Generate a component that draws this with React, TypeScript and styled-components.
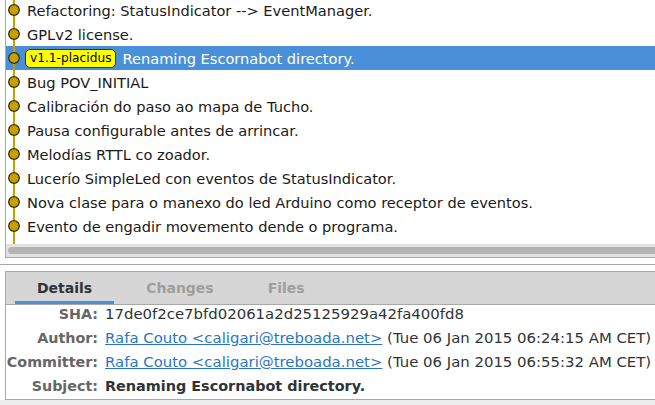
import React from 'react';
import styled, { createGlobalStyle } from 'styled-components';

const GlobalStyle = createGlobalStyle`
  html, body {
    margin: 0;
    padding: 0;
    background: #ededed;
  }
  body {
    font-family: "DejaVu Sans", "Liberation Sans", sans-serif;
    font-size: 14px;
    color: #2e3436;
  }
`;

const Window = styled.div`
  width: 655px;
  height: 405px;
  overflow: hidden;
  background: #ffffff;
  display: flex;
  flex-direction: column;
`;

const HistoryPanel = styled.div`
  margin-left: 5px;
  width: 660px;
  height: 257px;
  border-left: 1px solid #a8a8a8;
  border-bottom: 1px solid #a8a8a8;
  display: flex;
  flex-direction: column;
  overflow: hidden;
  flex-shrink: 0;
`;

const CommitList = styled.div`
  flex: 1;
  overflow: hidden;
`;

const Rows = styled.div`
  margin-top: -2px;
`;

const Row = styled.div<{ $selected?: boolean }>`
  height: 24px;
  display: flex;
  align-items: center;
  font-size: 14.6px;
  background: ${(p) => (p.$selected ? '#4a90d9' : 'transparent')};
  color: ${(p) => (p.$selected ? '#ffffff' : '#1a1a1a')};
  white-space: nowrap;
`;

const Graph = styled.svg`
  width: 20px;
  height: 24px;
  flex-shrink: 0;
  display: block;
`;

const Message = styled.span`
  margin-left: 1px;
`;

const TagBadge = styled.span`
  display: inline-flex;
  align-items: center;
  height: 17px;
  padding: 0 4px 0 4px;
  margin-left: -1px;
  margin-right: 5px;
  font-size: 12.2px;
  background: #ffff00;
  color: #000000;
  border: 1px solid #3a3a00;
  border-radius: 5px;
`;

const HScrollbar = styled.div`
  height: 13px;
  background: #e2e2e2;
  padding: 3px 0 0 2px;
  box-sizing: border-box;
  flex-shrink: 0;
`;

const Thumb = styled.div`
  height: 7px;
  width: 100%;
  background: #b4b4b4;
  border-radius: 4px 0 0 4px;
`;

const Separator = styled.div`
  height: 0;
  margin: 6px 0;
  border-top: 1px solid #a8a8a8;
  flex-shrink: 0;
`;

const DetailsPanel = styled.div`
  margin-left: 5px;
  width: 660px;
  height: 127px;
  border-left: 1px solid #a8a8a8;
  border-top: 1px solid #a8a8a8;
  border-bottom: 1px solid #a8a8a8;
  display: flex;
  flex-direction: column;
  flex-shrink: 0;
`;

const TabBar = styled.div`
  height: 32px;
  background: #d6d6d6;
  border-bottom: 1px solid #a8a8a8;
  display: flex;
  gap: 10px;
  padding-left: 9px;
`;

const Tab = styled.div<{ $active?: boolean }>`
  padding: 0 22px;
  display: flex;
  align-items: center;
  font-weight: bold;
  color: ${(p) => (p.$active ? '#2e3436' : '#9e9e9e')};
  box-shadow: ${(p) => (p.$active ? 'inset 0 -3px 0 #4a90d9' : 'none')};
`;

const Content = styled.div`
  flex: 1;
  display: grid;
  grid-template-columns: 92px auto;
  grid-auto-rows: 16px;
  row-gap: 8px;
  column-gap: 7px;
  align-content: start;
  background: #ffffff;
  white-space: nowrap;
  line-height: 16px;
  margin-top: 1px;
`;

const Label = styled.span`
  text-align: right;
  font-weight: bold;
  font-size: 14.3px;
  color: #666666;
`;

const Value = styled.span<{ $bold?: boolean }>`
  color: #2e3436;
  font-size: ${(p) => (p.$bold ? '14.4px' : '14.9px')};
  font-weight: ${(p) => (p.$bold ? 'bold' : 'normal')};
`;

const Link = styled.a`
  color: #2a76c6;
  text-decoration: underline;
`;

const Footer = styled.div`
  flex: 1;
  background: #ededed;
`;

const commits = [
  'Refactoring: StatusIndicator --> EventManager.',
  'GPLv2 license.',
  'Renaming Escornabot directory.',
  'Bug POV_INITIAL',
  'Calibración do paso ao mapa de Tucho.',
  'Pausa configurable antes de arrincar.',
  'Melodías RTTL co zoador.',
  'Lucerío SimpleLed con eventos de StatusIndicator.',
  'Nova clase para o manexo do led Arduino como receptor de eventos.',
  'Evento de engadir movemento dende o programa.',
];

const GraphNode = ({ dot = true }: { dot?: boolean }) => (
  <Graph viewBox="0 0 20 24">
    <line x1="8" y1="0" x2="8" y2="24" stroke="#c4a000" strokeWidth="2" />
    {dot && <circle cx="8" cy="12" r="5.3" fill="#c4a000" stroke="#3b3000" strokeWidth="1.3" />}
  </Graph>
);

const App = () => {
  return (
    <Window>
      <GlobalStyle />
      <HistoryPanel>
        <CommitList>
          <Rows>
            {commits.map((msg, i) => (
              <Row key={i} $selected={i === 2}>
                <GraphNode />
                {i === 2 && <TagBadge>v1.1-placidus</TagBadge>}
                <Message>{msg}</Message>
              </Row>
            ))}
            <Row>
              <GraphNode />
            </Row>
          </Rows>
        </CommitList>
        <HScrollbar>
          <Thumb />
        </HScrollbar>
      </HistoryPanel>
      <Separator />
      <DetailsPanel>
        <TabBar>
          <Tab $active>Details</Tab>
          <Tab>Changes</Tab>
          <Tab>Files</Tab>
        </TabBar>
        <Content>
          <Label>SHA:</Label>
          <Value>17de0f2ce7bfd02061a2d25125929a42fa400fd8</Value>
          <Label>Author:</Label>
          <Value>
            <Link href="#">Rafa Couto &lt;caligari@treboada.net&gt;</Link> (Tue 06 Jan 2015 06:24:15 AM CET)
          </Value>
          <Label>Committer:</Label>
          <Value>
            <Link href="#">Rafa Couto &lt;caligari@treboada.net&gt;</Link> (Tue 06 Jan 2015 06:55:32 AM CET)
          </Value>
          <Label>Subject:</Label>
          <Value $bold>Renaming Escornabot directory.</Value>
        </Content>
      </DetailsPanel>
      <Footer />
    </Window>
  );
};

export default App;
